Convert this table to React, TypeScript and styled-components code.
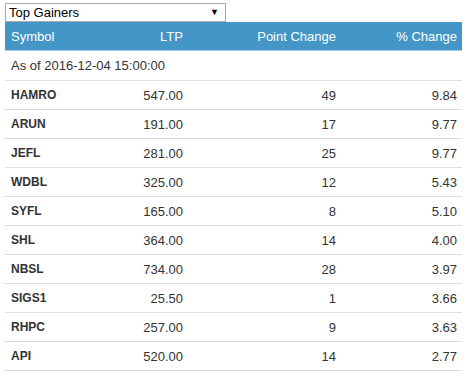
import styled, { createGlobalStyle } from 'styled-components';

const GlobalStyle = createGlobalStyle`
  html, body {
    margin: 0;
    padding: 0;
    background: #fff;
  }
  body {
    font-family: "Liberation Sans", Arial, sans-serif;
    font-size: 13px;
    color: #333;
  }
`;

const Wrapper = styled.div`
  width: 457px;
  padding: 3px 5px 0 5px;
`;

const SelectBox = styled.div`
  width: 221px;
  height: 19px;
  box-sizing: border-box;
  border: 1px solid #a9a9a9;
  background: #fff;
  display: flex;
  align-items: center;
  justify-content: space-between;
  padding: 0 6px 0 3px;
  font-size: 13px;
  color: #000;
`;

const Arrow = styled.span`
  font-size: 9px;
  line-height: 1;
`;

const Table = styled.table`
  width: 457px;
  border-collapse: collapse;
  table-layout: fixed;
`;

const Col = styled.col<{ $w: number }>`
  width: ${(p) => p.$w}px;
`;

const HeadCell = styled.th<{ $align?: string }>`
  background: #4496c6;
  color: #fff;
  font-weight: normal;
  font-size: 13px;
  height: 28px;
  padding: 0 5px 0 6px;
  text-align: ${(p) => p.$align || 'left'};
  border-bottom: 1px solid #9fcbe6;
  white-space: nowrap;
`;

const Cell = styled.td<{ $align?: string; $bold?: boolean }>`
  height: 28px;
  padding: 0 5px 0 6px;
  font-size: ${(p) => (p.$bold ? '12px' : '13px')};
  text-align: ${(p) => p.$align || 'left'};
  font-weight: ${(p) => (p.$bold ? 'bold' : 'normal')};
  border-bottom: 1px solid #ddd;
  color: #333;
  white-space: nowrap;
`;

const DateCell = styled(Cell)`
  height: 29px;
`;

const rows = [
  ['HAMRO', '547.00', '49', '9.84'],
  ['ARUN', '191.00', '17', '9.77'],
  ['JEFL', '281.00', '25', '9.77'],
  ['WDBL', '325.00', '12', '5.43'],
  ['SYFL', '165.00', '8', '5.10'],
  ['SHL', '364.00', '14', '4.00'],
  ['NBSL', '734.00', '28', '3.97'],
  ['SIGS1', '25.50', '1', '3.66'],
  ['RHPC', '257.00', '9', '3.63'],
  ['API', '520.00', '14', '2.77'],
];

export default function App() {
  return (
    <Wrapper>
      <GlobalStyle />
      <SelectBox>
        <span>Top Gainers</span>
        <Arrow>▼</Arrow>
      </SelectBox>
      <Table>
        <colgroup>
          <Col $w={90} />
          <Col $w={93} />
          <Col $w={153} />
          <Col $w={121} />
        </colgroup>
        <thead>
          <tr>
            <HeadCell>Symbol</HeadCell>
            <HeadCell $align="right">LTP</HeadCell>
            <HeadCell $align="right">Point Change</HeadCell>
            <HeadCell $align="right">% Change</HeadCell>
          </tr>
        </thead>
        <tbody>
          <tr>
            <DateCell colSpan={4}>As of 2016-12-04 15:00:00</DateCell>
          </tr>
          {rows.map((r) => (
            <tr key={r[0]}>
              <Cell $bold>{r[0]}</Cell>
              <Cell $align="right">{r[1]}</Cell>
              <Cell $align="right">{r[2]}</Cell>
              <Cell $align="right">{r[3]}</Cell>
            </tr>
          ))}
        </tbody>
      </Table>
    </Wrapper>
  );
}
